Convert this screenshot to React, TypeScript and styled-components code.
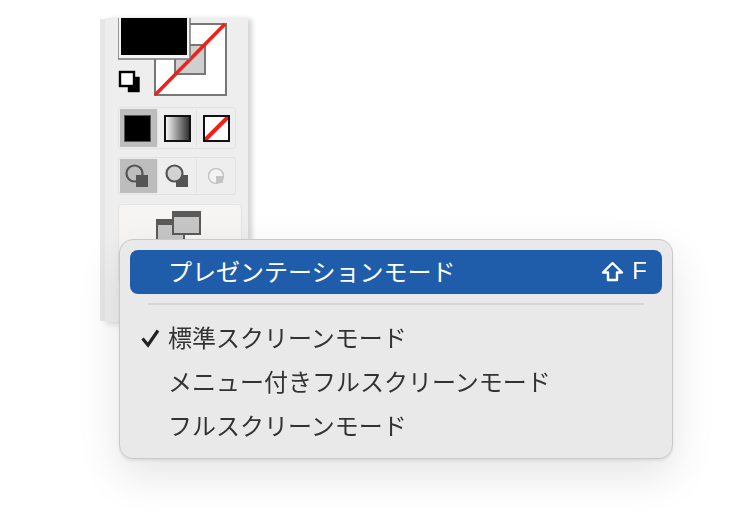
import React from 'react'
import styled, { createGlobalStyle } from 'styled-components'

const GlobalStyle = createGlobalStyle`
    html, body {
        margin: 0;
        padding: 0;
        background: #fff;
    }
    body {
        width: 750px;
        height: 529px;
        overflow: hidden;
        font-family: "Noto Sans CJK JP", "Liberation Sans", sans-serif;
    }
`

const Page = styled.div`
    position: relative;
    width: 750px;
    height: 529px;
    padding: 18px 0 0 105px;
    box-sizing: border-box;
    overflow: hidden;
    filter: blur(0.4px);
`

const ToolPanel = styled.div`
    width: 143px;
    height: 304px;
    padding-left: 13px;
    box-sizing: border-box;
    background: #eeeeee;
    box-shadow: -6px 0 0 -1px #e6e6e6, 5px 0 5px -1px #d6d6d6, 0 3px 6px rgba(0, 0, 0, 0.1);
    display: flex;
    flex-direction: column;
`

const ColorWidget = styled.svg`
    display: block;
    width: 112px;
    height: 89px;
    flex: none;
`

const ButtonRow = styled.div<{ $height: number; $gap: number }>`
    display: grid;
    grid-template-columns: 37px 39px 39px;
    width: 118px;
    height: ${(p) => p.$height}px;
    margin-bottom: ${(p) => p.$gap}px;
    padding: 1px;
    box-sizing: border-box;
    border: 1.5px solid #e2e2e2;
    border-radius: 3px;
    flex: none;
`

const RowCell = styled.div<{ $active?: boolean; $divider?: boolean }>`
    display: flex;
    align-items: center;
    justify-content: center;
    padding-right: ${(p) => (p.$active ? '3px' : '0')};
    background: ${(p) => (p.$active ? '#bdbdbd' : 'transparent')};
    border-left: ${(p) => (p.$divider ? '1.5px solid #e2e2e2' : 'none')};
`

const ScreenButton = styled.div`
    width: 124px;
    height: 80px;
    box-sizing: border-box;
    border: 1.5px solid #e4e4e4;
    border-radius: 4px;
    background: #f6f5f4;
    display: flex;
    justify-content: center;
    padding: 6px 4px 0 0;
    flex: none;
`

const ScreenIcon = styled.svg`
    display: block;
    width: 45px;
    height: 36px;
`

const Menu = styled.div`
    position: absolute;
    left: 119px;
    top: 239px;
    width: 554px;
    height: 220px;
    box-sizing: border-box;
    padding: 10px;
    background: #e9e9e9;
    border: 1px solid #c9c9c9;
    border-radius: 14px;
    box-shadow: 0 16px 44px rgba(0, 0, 0, 0.11), 0 2px 3px rgba(0, 0, 0, 0.08);
    display: flex;
    flex-direction: column;
`

const MenuItem = styled.div<{ $selected?: boolean }>`
    position: relative;
    display: flex;
    align-items: center;
    justify-content: space-between;
    height: 44px;
    padding: 0 15px 2px 38px;
    box-sizing: border-box;
    flex: none;
    border-radius: 8px;
    font-size: 24px;
    font-weight: 400;
    line-height: 42px;
    white-space: nowrap;
    color: ${(p) => (p.$selected ? '#ffffff' : '#333333')};
    background: ${(p) => (p.$selected ? '#1f5dab' : 'transparent')};
`

const MenuSeparator = styled.div`
    height: 2px;
    margin: 9px 18px 11px;
    background: #d5d5d5;
    flex: none;
`

const CheckMark = styled.svg`
    position: absolute;
    left: 10px;
    top: 12px;
    width: 21px;
    height: 20px;
`

const Shortcut = styled.span`
    display: flex;
    align-items: center;
    gap: 8px;
    font-family: "Liberation Sans", sans-serif;
    font-size: 24px;
    font-weight: 400;
`

const ShiftIcon = styled.svg`
    display: block;
    width: 23px;
    height: 21px;
`

const SwatchSvg = styled.svg`
    display: block;
    width: 27px;
    height: 27px;
`

const ShapeSvg = styled.svg`
    display: block;
    width: 24px;
    height: 24px;
`

const App: React.FC = () => {
    return (
        <>
            <GlobalStyle />
            <Page>
                <ToolPanel>
                    <ColorWidget viewBox="0 0 112 89">
                        <rect x="37" y="6" width="71" height="71" fill="#fff" stroke="#777" strokeWidth="2" />
                        <rect x="57" y="27" width="30" height="29" fill="#cfcfcf" stroke="#777" strokeWidth="2" />
                        <line x1="37" y1="77" x2="107" y2="6" stroke="#ee2018" strokeWidth="3.5" />
                        <rect x="0" y="-10" width="72" height="51" fill="#f4f4f4" stroke="#777" strokeWidth="1.5" />
                        <rect x="3" y="-10" width="66" height="47" fill="#000" />
                        <rect x="11" y="60" width="9.5" height="13" fill="#000" stroke="#000" strokeWidth="2.4" />
                        <rect x="2" y="54" width="14" height="14" fill="#fff" stroke="#000" strokeWidth="2.4" />
                    </ColorWidget>
                    <ButtonRow $height={42} $gap={8}>
                        <RowCell $active>
                            <SwatchSvg viewBox="0 0 27 27">
                                <rect x="0.5" y="0.5" width="26" height="26" fill="#000" stroke="#555" />
                            </SwatchSvg>
                        </RowCell>
                        <RowCell $divider>
                            <SwatchSvg viewBox="0 0 27 27">
                                <defs>
                                    <linearGradient id="gradSwatch" x1="0" y1="0" x2="1" y2="0">
                                        <stop offset="0" stopColor="#ffffff" />
                                        <stop offset="1" stopColor="#2a2a2a" />
                                    </linearGradient>
                                </defs>
                                <rect x="1" y="1" width="25" height="25" fill="url(#gradSwatch)" stroke="#111" strokeWidth="2" />
                            </SwatchSvg>
                        </RowCell>
                        <RowCell $divider>
                            <SwatchSvg viewBox="0 0 27 27">
                                <rect x="1" y="1" width="25" height="25" fill="#fff" />
                                <line x1="2" y1="25" x2="25" y2="2" stroke="#ee2018" strokeWidth="4" />
                                <rect x="1" y="1" width="25" height="25" fill="none" stroke="#111" strokeWidth="2" />
                            </SwatchSvg>
                        </RowCell>
                    </ButtonRow>
                    <ButtonRow $height={38} $gap={9}>
                        <RowCell $active>
                            <ShapeSvg viewBox="0 0 24 24">
                                <circle cx="9.5" cy="9.5" r="8" fill="none" stroke="#555" strokeWidth="2.2" />
                                <rect x="11" y="11" width="12" height="12" fill="#555" />
                            </ShapeSvg>
                        </RowCell>
                        <RowCell $divider>
                            <ShapeSvg viewBox="0 0 24 24">
                                <rect x="11" y="11" width="12" height="12" fill="#555" />
                                <circle cx="9.5" cy="9.5" r="8" fill="#d2d2d2" stroke="#555" strokeWidth="2.2" />
                            </ShapeSvg>
                        </RowCell>
                        <RowCell $divider>
                            <ShapeSvg viewBox="0 0 24 24">
                                <circle cx="12" cy="12" r="7.5" fill="#f4f4f4" stroke="#c4c4c4" strokeWidth="1.5" />
                                <rect x="12" y="12" width="7" height="7" fill="#c4c4c4" />
                            </ShapeSvg>
                        </RowCell>
                    </ButtonRow>
                    <ScreenButton>
                        <ScreenIcon viewBox="0 0 45 36">
                            <rect x="1" y="9" width="27" height="26" fill="#c6c6c6" stroke="#5a5a5a" strokeWidth="2" />
                            <rect x="1" y="9" width="27" height="5" fill="#5a5a5a" />
                            <rect x="17" y="1" width="27" height="22" fill="#c6c6c6" stroke="#5a5a5a" strokeWidth="2" />
                            <rect x="17" y="1" width="27" height="5" fill="#5a5a5a" />
                        </ScreenIcon>
                    </ScreenButton>
                </ToolPanel>
                <Menu>
                    <MenuItem $selected>
                        プレゼンテーションモード
                        <Shortcut>
                            <ShiftIcon viewBox="0 0 23 21">
                                <path d="M11.5 2 L21 11.5 H16 V19 H7 V11.5 H2 Z" fill="none" stroke="#fff" strokeWidth="2.4" strokeLinejoin="round" />
                            </ShiftIcon>
                            F
                        </Shortcut>
                    </MenuItem>
                    <MenuSeparator />
                    <MenuItem>
                        <CheckMark viewBox="0 0 21 20">
                            <path d="M2.5 10.5 L8 17 L18 2.5" fill="none" stroke="#222" strokeWidth="3.2" />
                        </CheckMark>
                        標準スクリーンモード
                    </MenuItem>
                    <MenuItem>メニュー付きフルスクリーンモード</MenuItem>
                    <MenuItem>フルスクリーンモード</MenuItem>
                </Menu>
            </Page>
        </>
    )
}

export default App
